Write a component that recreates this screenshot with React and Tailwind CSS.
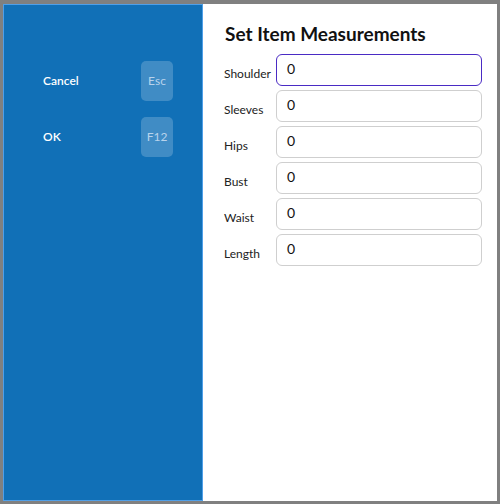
import React from "react";

const fields = ["Shoulder", "Sleeves", "Hips", "Bust", "Waist", "Length"];

export default function App() {
  return (
    <div
      className="w-[500px] h-[504px] bg-[#808080] pt-[4px] pl-[3px] pr-[3px] pb-[3px] flex"
      style={{ fontFamily: "Lato, 'Noto Sans', sans-serif" }}
    >
      <div className="w-[200px] h-full bg-[#1170b7] border border-[#4f9fe8] pt-[56px] pl-[39px] pr-[29px] flex flex-col gap-[16px]">
        <div className="flex items-center justify-between">
          <span className="text-white text-[12px] font-semibold">Cancel</span>
          <div className="w-[32px] h-[40px] rounded-[5px] bg-white/20 flex items-center justify-center text-[12px] text-[#b8d3ec]">
            Esc
          </div>
        </div>
        <div className="flex items-center justify-between">
          <span className="text-white text-[12px] font-semibold">OK</span>
          <div className="w-[32px] h-[40px] rounded-[5px] bg-white/20 flex items-center justify-center text-[12px] text-[#b8d3ec]">
            F12
          </div>
        </div>
      </div>
      <div className="flex-1 h-full bg-white pl-[21px] pr-[15px] pt-[18px]">
        <h1 className="text-[19px] leading-[24px] font-bold text-[#111] ml-[1px] mb-[8px]">
          Set Item Measurements
        </h1>
        <div className="flex flex-col gap-[4px]">
          {fields.map((f, i) => (
            <div key={f} className="flex items-start">
              <label className="w-[52px] pt-[13px] text-[12px] leading-[14px] text-[#222]">{f}</label>
              <div
                className={
                  "flex-1 h-[32px] rounded-[6px] border bg-white pl-[10px] pt-[6px] text-[14px] leading-[16px] text-[#111] " +
                  (i === 0 ? "border-[#4a2bc4]" : "border-[#cfcfcf]")
                }
              >
                0
              </div>
            </div>
          ))}
        </div>
      </div>
    </div>
  );
}
